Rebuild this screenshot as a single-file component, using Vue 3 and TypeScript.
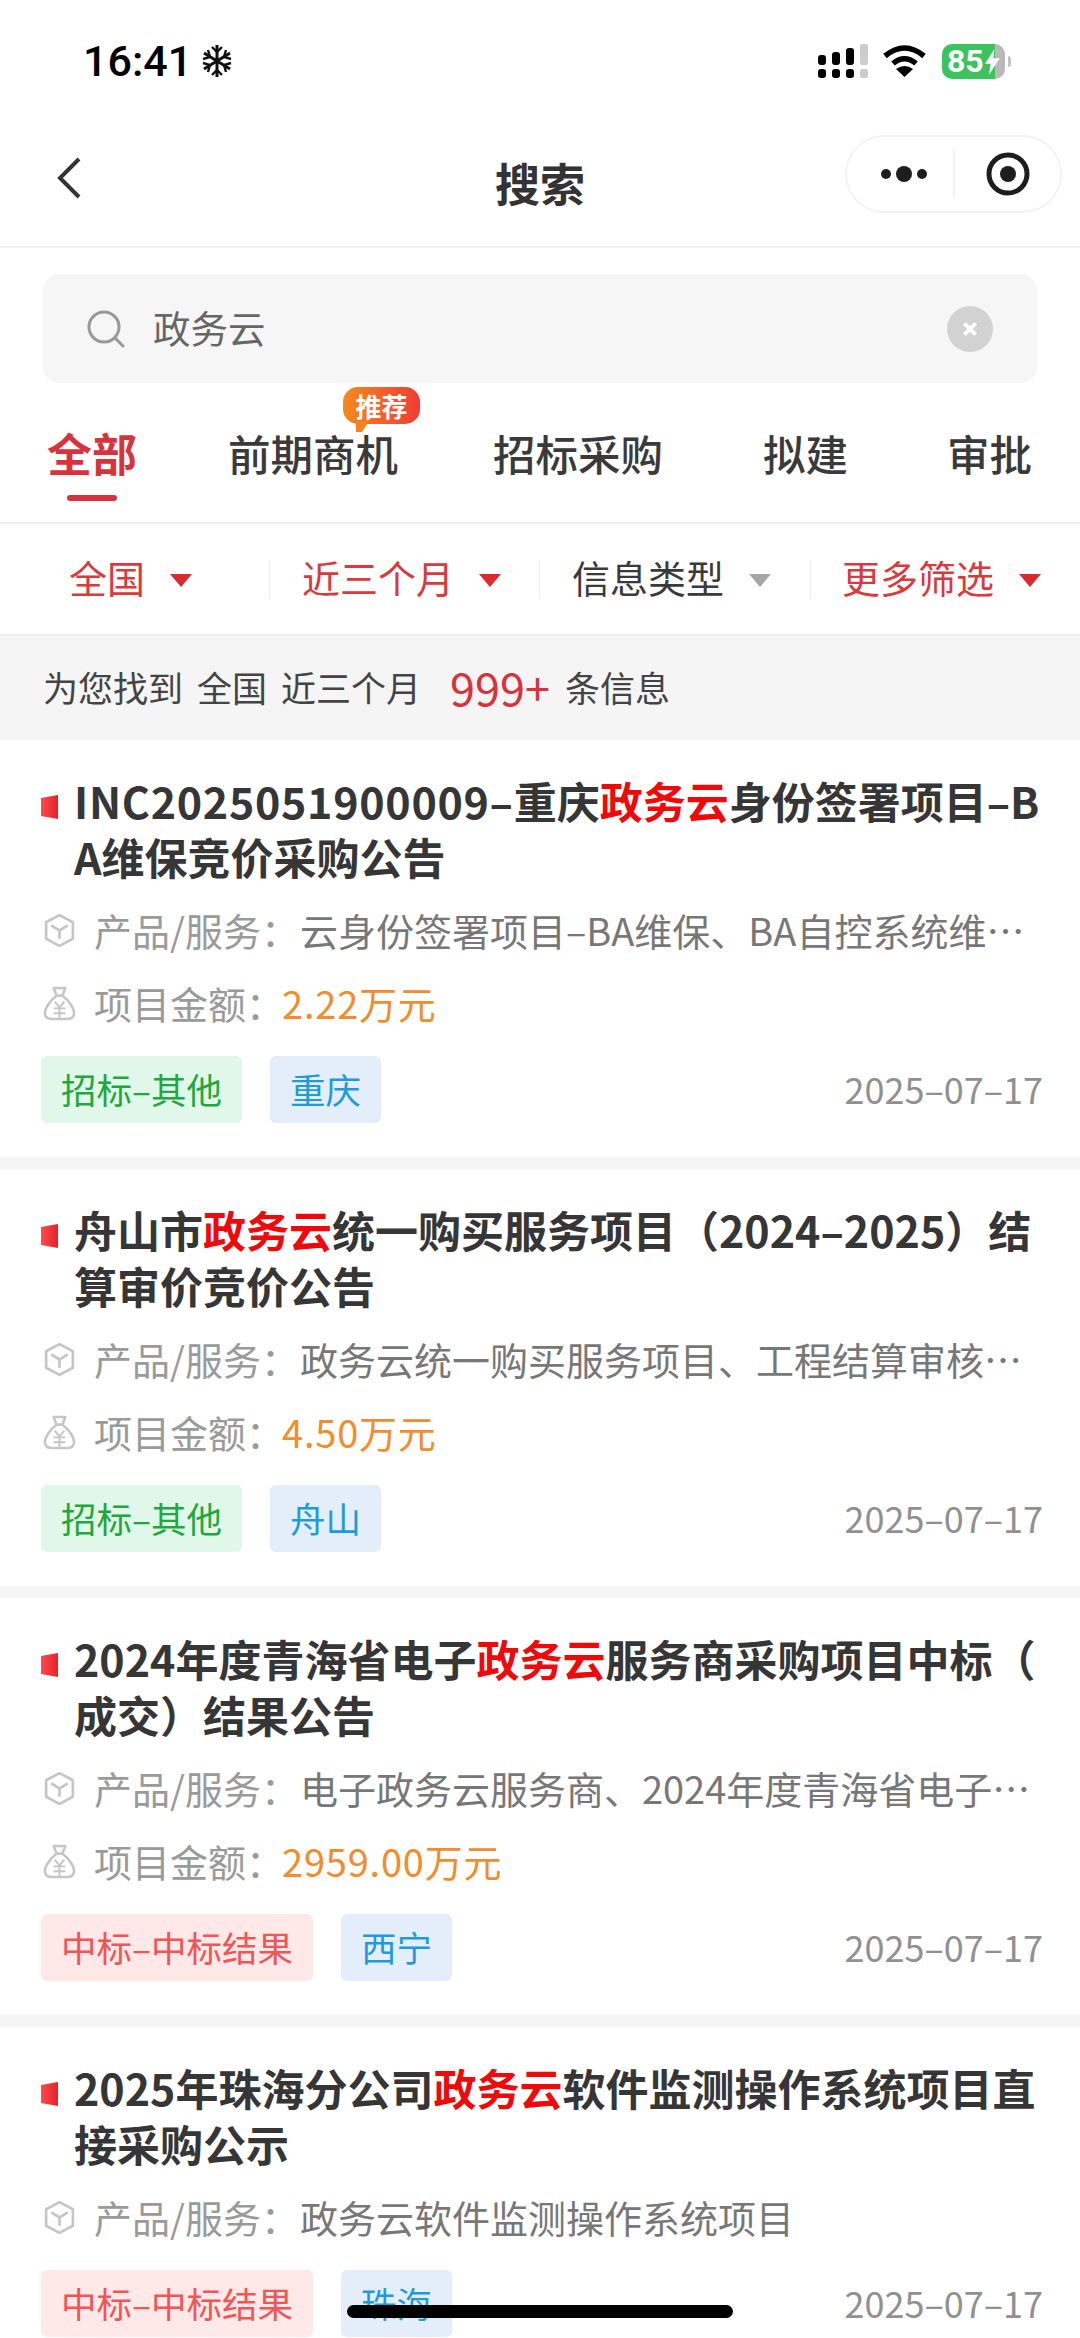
<script setup lang="ts">
type TagKind = 'green' | 'red'

interface Notice {
  code?: string
  before: string
  after: string
  product: string
  amount?: string
  tag: string
  kind: TagKind
  city: string
  date: string
}

const keyword = '政务云'

const tabs = ['全部', '前期商机', '招标采购', '拟建', '审批']

const filters = [
  { label: '全国', active: true },
  { label: '近三个月', active: true },
  { label: '信息类型', active: false },
  { label: '更多筛选', active: true }
]

const notices: Notice[] = [
  {
    code: 'INC2025051900009–',
    before: '重庆',
    after: '身份签署项目–BA维保竞价采购公告',
    product: '云身份签署项目–BA维保、BA自控系统维保服务项目',
    amount: '2.22万元',
    tag: '招标–其他',
    kind: 'green',
    city: '重庆',
    date: '2025–07–17'
  },
  {
    before: '舟山市',
    after: '统一购买服务项目（2024–2025）结算审价竞价公告',
    product: '政务云统一购买服务项目、工程结算审核服务项目',
    amount: '4.50万元',
    tag: '招标–其他',
    kind: 'green',
    city: '舟山',
    date: '2025–07–17'
  },
  {
    before: '2024年度青海省电子',
    after: '服务商采购项目中标（成交）结果公告',
    product: '电子政务云服务商、2024年度青海省电子政务云服务',
    amount: '2959.00万元',
    tag: '中标–中标结果',
    kind: 'red',
    city: '西宁',
    date: '2025–07–17'
  },
  {
    before: '2025年珠海分公司',
    after: '软件监测操作系统项目直接采购公示',
    product: '政务云软件监测操作系统项目',
    tag: '中标–中标结果',
    kind: 'red',
    city: '珠海',
    date: '2025–07–17'
  }
]
</script>

<template>
  <div class="page">
    <div class="status">
      <div class="status-left">
        <span class="time">16:41</span>
        <svg class="snow" viewBox="0 0 32 34" fill="none" stroke="#111" stroke-width="3">
          <path d="M16 1V33M3 9L29 25M29 9L3 25" />
          <path d="M11 3L16 8L21 3M11 31L16 26L21 31M2 15L9 13L7 6M30 15L23 13L25 6M2 19L9 21L7 28M30 19L23 21L25 28" stroke-width="2.4" />
        </svg>
      </div>
      <div class="status-right">
        <svg class="signal" viewBox="0 0 50 34" fill="#000">
          <rect x="0" y="11" width="8" height="10" rx="3" />
          <rect x="14" y="8" width="8" height="13" rx="3" />
          <rect x="28" y="4" width="8" height="17" rx="3" />
          <rect x="42" y="0" width="8" height="21" rx="2" fill="#ccc" />
          <rect x="0" y="25" width="8" height="9" rx="3" />
          <rect x="14" y="25" width="8" height="9" rx="3" />
          <rect x="28" y="25" width="8" height="9" rx="3" />
          <rect x="42" y="25" width="8" height="9" rx="2" fill="#ccc" />
        </svg>
        <svg class="wifi" viewBox="0 0 43 32" fill="none" stroke="#000" stroke-width="5.5">
          <path d="M2 11Q21.5 -5 41 11" />
          <path d="M10 18.500Q21.500 9 33 18.500" />
          <path d="M21.500 32L13 24Q21.500 18 30 24Z" fill="#000" stroke="none" />
        </svg>
        <div class="battery">
          <span class="battery-num">85</span>
          <svg class="bolt" viewBox="0 0 16 28" fill="#fff">
            <path d="M10 0L0 16H6L4 28L16 10H9Z" />
          </svg>
        </div>
        <div class="battery-tip"></div>
      </div>
    </div>

    <div class="nav">
      <svg class="back" viewBox="0 0 26 42" fill="none" stroke="#333" stroke-width="4">
        <path d="M23 2L4 21L23 40" />
      </svg>
      <div class="nav-title">搜索</div>
      <div class="capsule">
        <svg class="more" viewBox="0 0 46 16" fill="#1d1d1d">
          <circle cx="5" cy="8" r="5" />
          <circle cx="23" cy="8" r="8" />
          <circle cx="41" cy="8" r="5" />
        </svg>
        <span class="capsule-line"></span>
        <svg class="target" viewBox="0 0 44 44">
          <circle cx="22" cy="22" r="19" fill="none" stroke="#1d1d1d" stroke-width="5" />
          <circle cx="22" cy="22" r="8" fill="#1d1d1d" />
        </svg>
      </div>
    </div>

    <div class="search-wrap">
      <div class="search">
        <svg class="search-icon" viewBox="0 0 38 38" fill="none" stroke="#999" stroke-width="3">
          <circle cx="17" cy="17" r="15" />
          <path d="M28 28L36 36" stroke-linecap="round" />
        </svg>
        <span class="search-text">{{ keyword }}</span>
        <span class="clear">
          <svg viewBox="0 0 14 14" fill="none" stroke="#fff" stroke-width="3.400">
            <path d="M2 2L12 12M12 2L2 12" />
          </svg>
        </span>
      </div>
    </div>

    <div class="tabs">
      <div v-for="(tab, i) in tabs" :key="tab" class="tab" :class="{ active: i === 0 }">
        {{ tab }}
        <div v-if="i === 1" class="badge">推荐</div>
      </div>
    </div>

    <div class="filters">
      <div v-for="f in filters" :key="f.label" class="filter" :class="{ on: f.active }">
        <span>{{ f.label }}</span>
        <i class="arrow"></i>
      </div>
    </div>

    <div class="summary">
      <span>为您找到</span>
      <span>全国</span>
      <span>近三个月</span>
      <span class="count">999+</span>
      <span>条信息</span>
    </div>

    <div v-for="n in notices" :key="n.before" class="card">
      <div class="head">
        <svg class="flag" viewBox="0 0 17 24">
          <defs>
            <linearGradient id="flagRed" x1="0" y1="0" x2="1" y2="0">
              <stop offset="0" stop-color="#ff4a4a" />
              <stop offset="1" stop-color="#e3242b" />
            </linearGradient>
          </defs>
          <path d="M0 3L17 0V24L0 21Z" fill="url(#flagRed)" />
        </svg>
        <div class="title"><span v-if="n.code" class="code">{{ n.code }}</span>{{ n.before }}<em>{{ keyword }}</em>{{ n.after }}</div>
      </div>

      <div class="row">
        <svg class="row-icon" viewBox="0 0 32 34" fill="none" stroke="#c6c6c6" stroke-width="2.600" stroke-linejoin="round">
          <path d="M16 2L29 9V25L16 32L3 25V9Z" />
          <path d="M8 12L16 17L24 12M16 17V25" />
        </svg>
        <span class="row-label">产品/服务：</span>
        <span class="row-value">{{ n.product }}</span>
      </div>

      <div v-if="n.amount" class="row">
        <svg class="row-icon" viewBox="0 0 34 36" fill="none" stroke="#c6c6c6" stroke-width="2.600" stroke-linejoin="round">
          <path d="M11 2L23 2L20 10H14Z" />
          <path d="M14 10C7 15 2 23 2 28C2 33 6 34 10 34H24C28 34 32 33 32 28C32 23 27 15 20 10Z" />
          <path d="M12 16L17 22L22 16M11 23H23M11 28H23M17 22V33" stroke-width="2" />
        </svg>
        <span class="row-label">项目金额：</span>
        <span class="row-amount">{{ n.amount }}</span>
      </div>

      <div class="foot">
        <span class="tag" :class="n.kind">{{ n.tag }}</span>
        <span class="tag blue">{{ n.city }}</span>
        <span class="date">{{ n.date }}</span>
      </div>
    </div>

    <div class="home-bar"></div>
  </div>
</template>

<style scoped>
.page {
  position: relative;
  width: 1080px;
  height: 2338px;
  overflow: hidden;
  background: #f5f5f5;
  font-family: "Noto Sans CJK SC", "Noto Sans", sans-serif;
  color: #333;
}

.status {
  height: 122px;
  background: #fff;
  display: flex;
  align-items: center;
  justify-content: space-between;
  padding: 0 69px 0 83px;
  box-sizing: border-box;
}

.status-left {
  display: flex;
  align-items: center;
  gap: 9px;
}

.time {
  font-family: Roboto, "Liberation Sans", sans-serif;
  font-size: 43px;
  font-weight: 500;
  line-height: 50px;
  color: #000;
}

.snow {
  width: 32px;
  height: 34px;
}

.status-right {
  display: flex;
  align-items: center;
}

.signal {
  width: 50px;
  height: 34px;
  margin-right: 15px;
}

.wifi {
  width: 43px;
  height: 32px;
  margin-right: 16px;
}

.battery {
  position: relative;
  width: 63px;
  height: 35px;
  border-radius: 10px;
  overflow: hidden;
  background: linear-gradient(90deg, #3cc25e 84%, #b9b9b9 84%);
  display: flex;
  align-items: center;
}

.battery-num {
  margin-left: 5px;
  font-family: Roboto, "Liberation Sans", sans-serif;
  font-size: 32px;
  font-weight: 700;
  line-height: 35px;
  color: #fff;
}

.bolt {
  position: absolute;
  left: 43px;
  top: 5px;
  width: 15px;
  height: 26px;
}

.battery-tip {
  width: 3px;
  height: 11px;
  margin-left: 3px;
  border-radius: 0 3px 3px 0;
  background: #c4c4c4;
}

.nav {
  height: 124px;
  background: #fff;
  border-bottom: 2px solid #f0f0f0;
  display: grid;
  grid-template-columns: 1fr auto 1fr;
  align-items: start;
  padding: 0 18px;
}

.back {
  width: 26px;
  height: 42px;
  margin: 35px 0 0 38px;
}

.nav-title {
  margin-top: 36px;
  font-size: 45px;
  font-weight: 700;
  line-height: 50px;
  color: #333;
}

.capsule {
  justify-self: end;
  width: 217px;
  height: 78px;
  margin-top: 13px;
  box-sizing: border-box;
  border: 2px solid #f3f3f3;
  border-radius: 39px;
  display: flex;
  align-items: center;
  padding-left: 12px;
}

.more {
  width: 46px;
  height: 16px;
  margin-left: 22px;
}

.capsule-line {
  width: 2px;
  height: 48px;
  margin-left: 26px;
  background: #f0f0f0;
}

.target {
  width: 44px;
  height: 44px;
  margin-left: 31px;
}

.search-wrap {
  background: #fff;
  padding: 26px 43px 0;
}

.search {
  height: 109px;
  border-radius: 16px;
  background: #f6f6f6;
  display: flex;
  align-items: center;
  padding: 0 44px 0 44px;
}

.search-icon {
  width: 38px;
  height: 38px;
}

.search-text {
  margin: 0 0 5px 28px;
  flex: 1;
  font-size: 37.5px;
  color: #666;
}

.clear {
  width: 46px;
  height: 46px;
  border-radius: 50%;
  background: #d2d2d2;
  display: flex;
  align-items: center;
  justify-content: center;
}

.clear svg {
  width: 16px;
  height: 16px;
}

.tabs {
  height: 99px;
  background: #fff;
  border-bottom: 2px solid #efefef;
  display: flex;
  padding: 40px 0 0 47px;
}

.tab {
  position: relative;
  height: 60px;
  font-size: 42.5px;
  font-weight: 500;
  line-height: 60px;
  color: #3a3a3a;
  white-space: nowrap;
}

.tab:nth-child(2) {
  margin-left: 91px;
}

.tab:nth-child(3) {
  margin-left: 95px;
}

.tab:nth-child(4) {
  margin-left: 100px;
}

.tab:nth-child(5) {
  margin-left: 99px;
}

.tab.active {
  font-size: 45px;
  font-weight: 700;
  color: #d8333c;
}

.tab.active::after {
  content: "";
  position: absolute;
  left: 20px;
  top: 72px;
  width: 50px;
  height: 6px;
  border-radius: 3px;
  background: #d8333c;
}

.badge {
  position: absolute;
  left: 115px;
  top: -36px;
  width: 77px;
  height: 37px;
  border-radius: 15px;
  background: linear-gradient(90deg, #f58a1c, #f03a35);
  font-size: 26px;
  font-weight: 700;
  line-height: 37px;
  text-align: center;
  color: #fff;
}

.badge::after {
  content: "";
  position: absolute;
  left: 13px;
  top: 34px;
  border-left: 6px solid #f5811f;
  border-right: 7px solid transparent;
  border-top: 11px solid #f5811f;
}

.filters {
  height: 110px;
  background: #fff;
  border-bottom: 2px solid #eee;
  display: grid;
  grid-template-columns: 269px 270px 271px 270px;
  align-items: center;
}

.filter {
  display: flex;
  align-items: center;
  gap: 25px;
  height: 38px;
  padding-left: 32px;
  border-left: 1px solid #eee;
  font-size: 38px;
  line-height: 34px;
  color: #3a3a3a;
}

.filter > span {
  margin-bottom: 4px;
}

.filter:first-child {
  padding-left: 69px;
  border-left: none;
}

.filter:last-child {
  padding-left: 31px;
}

.filter.on {
  color: #d83a3e;
}

.arrow {
  width: 0;
  height: 0;
  border-left: 11px solid transparent;
  border-right: 11px solid transparent;
  border-top: 13px solid #a6a6a6;
  margin-top: 2px;
}

.filter.on .arrow {
  border-top-color: #d92b30;
}

.summary {
  height: 104px;
  display: flex;
  align-items: center;
  gap: 14px;
  padding: 0 0 4px 43px;
  box-sizing: border-box;
  font-size: 35px;
  color: #444;
}

.count {
  margin: 0 1px 0 15px;
  font-size: 45px;
  color: #d8333c;
}

.card {
  background: #fff;
  padding: 32px 37px 34px 41px;
  margin-bottom: 12px;
}

.head {
  display: flex;
  align-items: flex-start;
  gap: 16px;
  margin-bottom: 21px;
}

.flag {
  flex: none;
  width: 17px;
  height: 24px;
  margin-top: 23px;
}

.title {
  font-size: 43px;
  font-weight: 700;
  line-height: 56px;
  color: #363636;
  word-break: break-all;
  line-break: anywhere;
}

.title .code {
  letter-spacing: 0.7px;
}

.title em {
  font-style: normal;
  color: #ee0a0a;
}

.row {
  height: 50px;
  margin-top: 23px;
  display: flex;
  align-items: center;
  font-size: 38px;
  line-height: 50px;
  white-space: nowrap;
}

.head + .row {
  margin-top: 0;
}

.row-icon {
  flex: none;
  width: 33px;
  height: 35px;
  margin: 0 18px 0 2px;
}

.row-label {
  flex: none;
  color: #9a9a9a;
}

.row-value {
  flex: 1;
  min-width: 0;
  margin-left: 1px;
  overflow: hidden;
  text-overflow: ellipsis;
  color: #777;
}

.row-amount {
  margin-left: -2px;
  letter-spacing: 0.8px;
  color: #f28c2d;
}

.foot {
  display: flex;
  align-items: center;
  gap: 28px;
  margin-top: 28px;
}

.tag {
  height: 67px;
  padding: 0 20px;
  border-radius: 6px;
  font-size: 35.5px;
  line-height: 65px;
  white-space: nowrap;
}

.tag.green {
  background: #e0f7ea;
  color: #1fa83c;
}

.tag.red {
  background: #ffe8e8;
  color: #f25555;
}

.tag.blue {
  background: #e3eefa;
  color: #1e9bd8;
}

.date {
  margin: 0 0 4px auto;
  font-size: 36px;
  color: #909090;
}

.home-bar {
  position: absolute;
  left: 347px;
  top: 2305px;
  width: 386px;
  height: 13px;
  border-radius: 7px;
  background: #000;
}
</style>

<style>
body {
  background: #fff;
}
</style>
